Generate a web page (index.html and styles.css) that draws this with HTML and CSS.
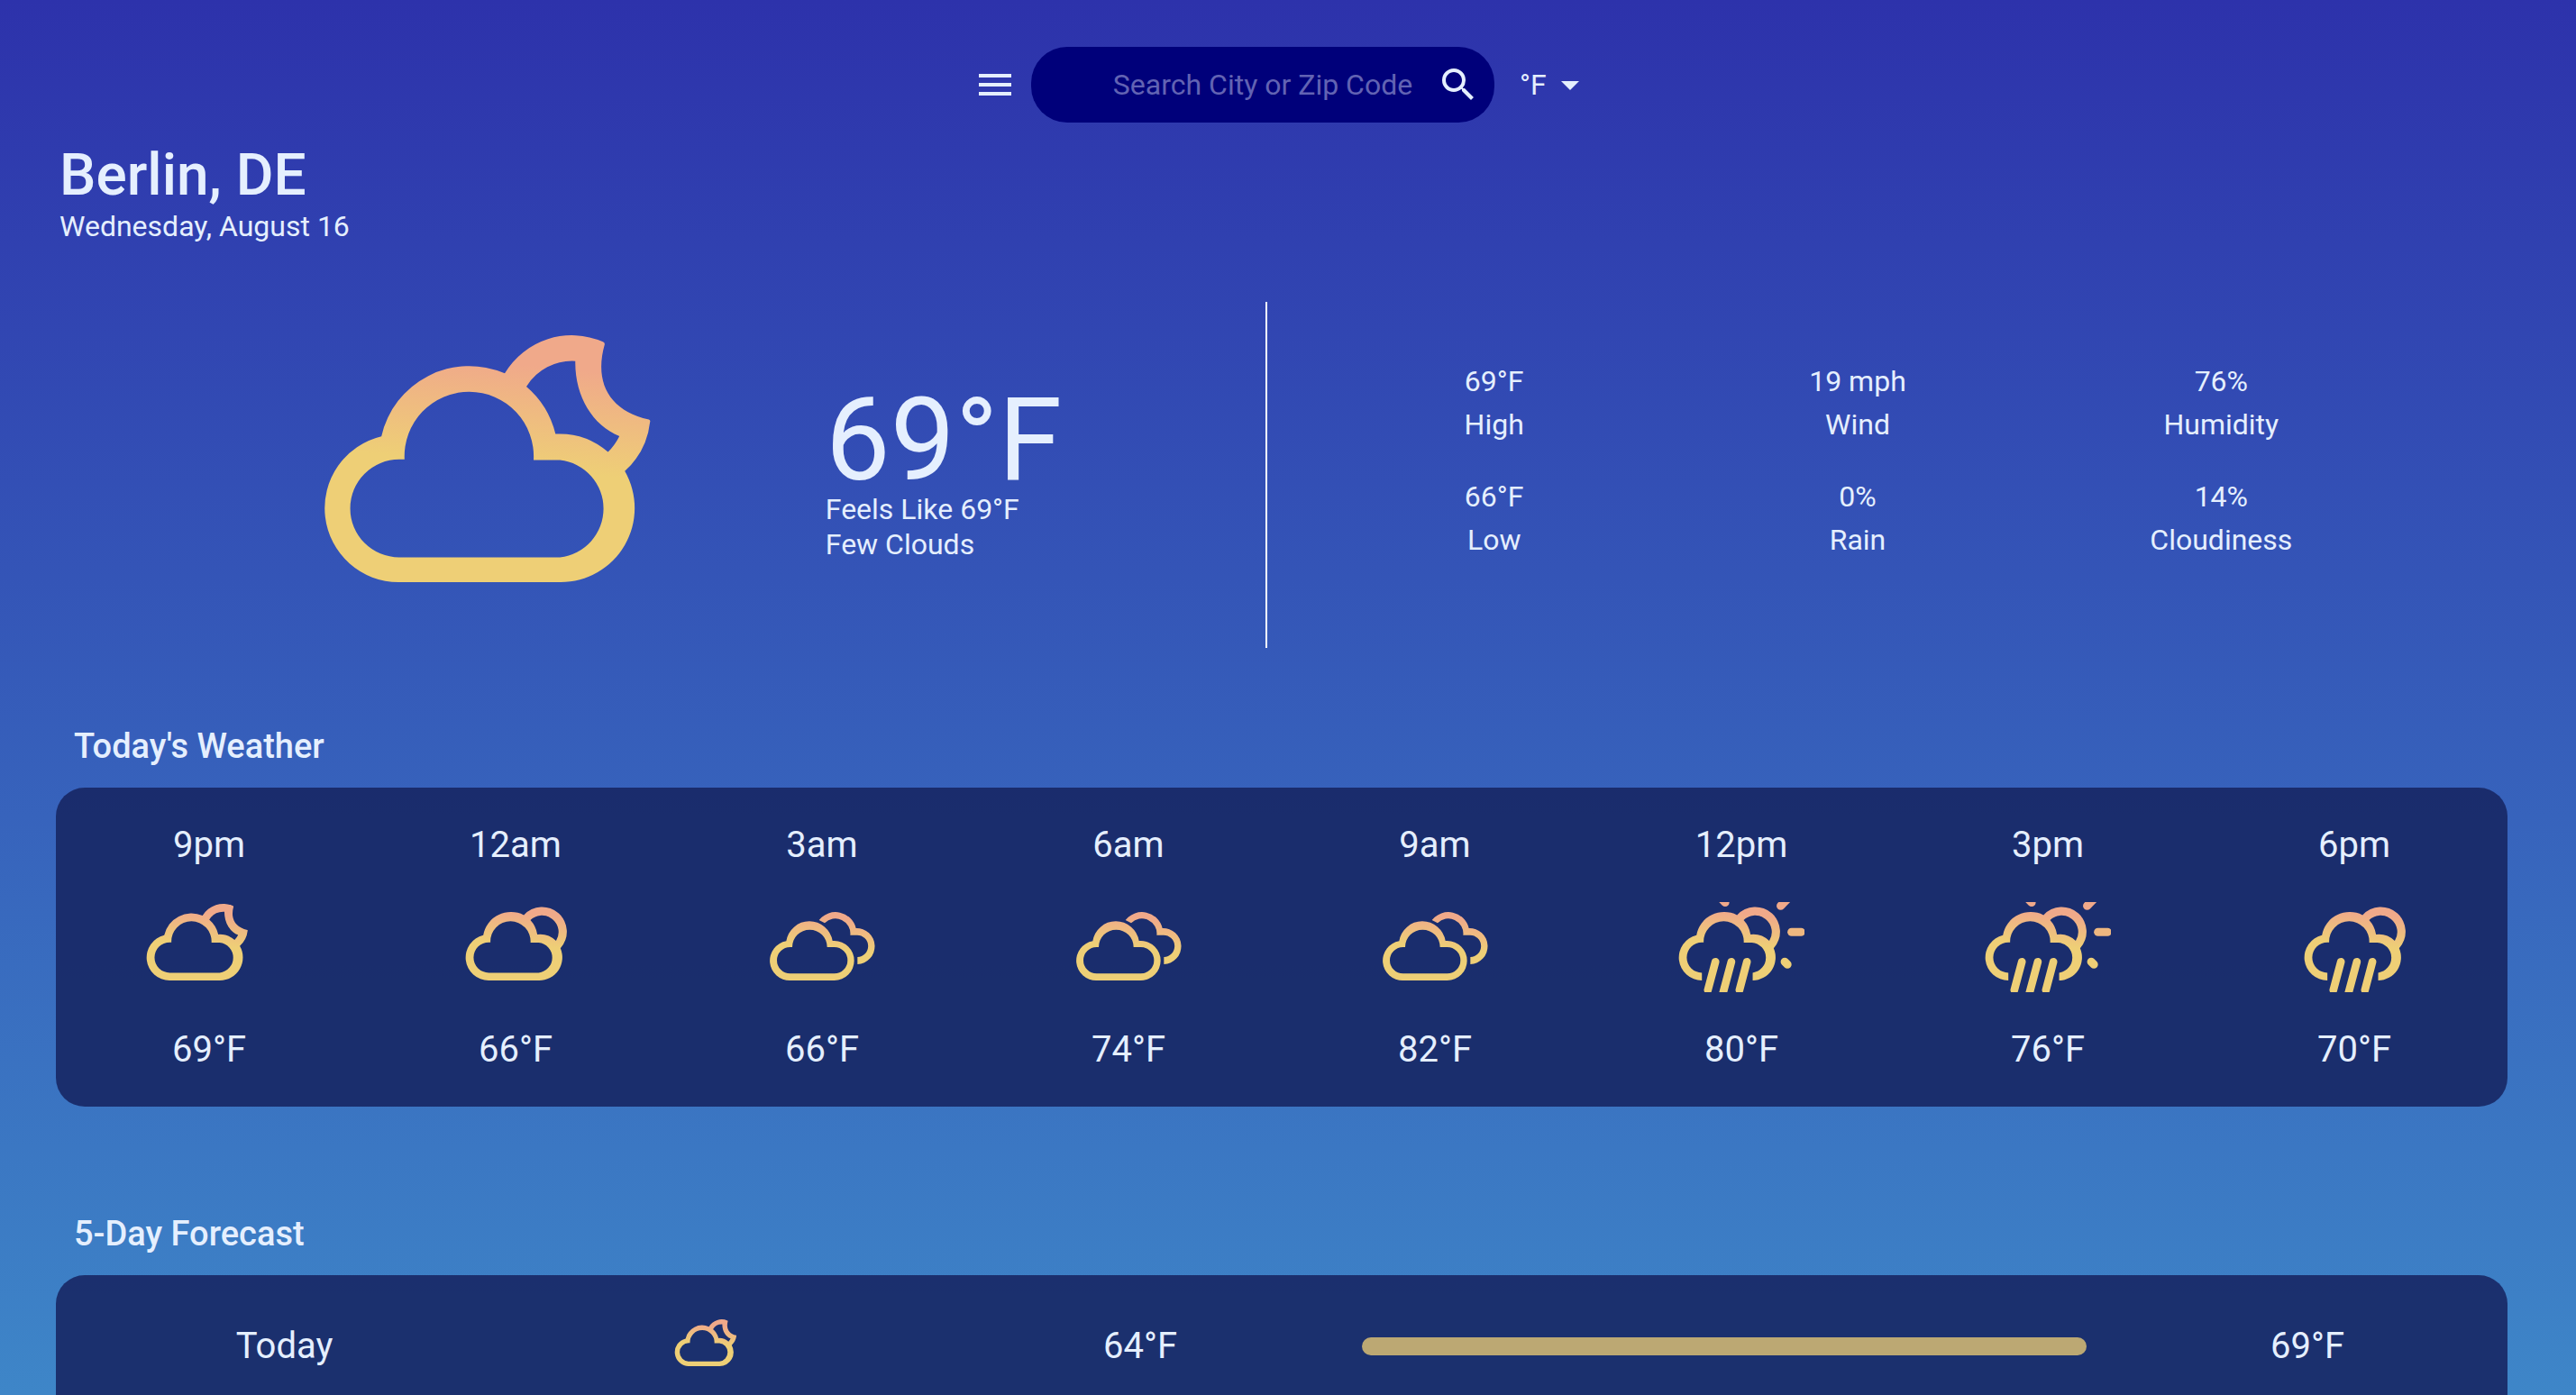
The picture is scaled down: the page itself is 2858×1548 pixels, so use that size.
FILE: index.html
```html
<!DOCTYPE html>
<html lang="en">
<head>
<meta charset="utf-8">
<meta name="viewport" content="width=device-width, initial-scale=1">
<title>Weather – Berlin, DE</title>
<link rel="stylesheet" href="styles.css">
</head>
<body>
<svg class="sprite" aria-hidden="true">
  <defs>
    <linearGradient id="glow" gradientUnits="userSpaceOnUse" x1="0" y1="90" x2="-34" y2="432">
      <stop offset="0" stop-color="#f0a98a"/>
      <stop offset="1" stop-color="#eecf76"/>
    </linearGradient>
    <linearGradient id="glow-clouds" gradientUnits="userSpaceOnUse" x1="1006" y1="54" x2="995" y2="158">
      <stop offset="0" stop-color="#f0a98a"/>
      <stop offset="1" stop-color="#eecf76"/>
    </linearGradient>
    <symbol id="night-cloud" viewBox="57 46 1353 967">
      <path fill="url(#glow)" fill-rule="evenodd" d="M309 887A246.4 246.4 0 0 1 252 401A300 300 0 0 1 663 191A260 260 0 0 1 990 86Q996 88 996 94C960 220 1010 315 1143 345Q1149 347 1147 353A262 262 0 0 1 1063 517A247 247 0 0 1 849 887ZM311 804A163 163 0 0 1 311 478H329A215.3 215.3 0 1 1 759 480H847A163 163 0 0 1 847 804ZM735 235A180 180 0 0 1 898 150C896 265 955 365 1045 400Q1030 430 1007 453A247 247 0 0 0 832 393A300 300 0 0 0 735 235Z"/>
    </symbol>
    <symbol id="sun-cloud" viewBox="-78 46 1353 967">
      <path fill="url(#glow)" fill-rule="evenodd" d="M309 887A246.4 246.4 0 0 1 252 401A300 300 0 0 1 687 186A264 264 0 0 1 1080 542A247 247 0 0 1 849 887ZM311 804A163 163 0 0 1 311 478H329A215.3 215.3 0 1 1 759 480H847A163 163 0 0 1 847 804ZM758 240A178 178 0 0 1 1033 462A247 247 0 0 0 832 393A300 300 0 0 0 758 240Z"/>
    </symbol>
    <symbol id="clouds" viewBox="1024 33 420 300">
      <path fill="url(#glow-clouds)" fill-rule="evenodd" d="M1128 294A66 66 0 0 1 1115 163A78 78 0 0 1 1269 162H1275A66 66 0 0 1 1275 294ZM1128 271A44 44 0 0 1 1128 183H1135A58 58 0 0 1 1251 183H1275A44 44 0 0 1 1275 271ZM1224 93A70 70 0 0 1 1347 120A60 60 0 0 1 1352 240V216A36.5 36.5 0 0 0 1350 143H1328A49.7 49.7 0 0 0 1243 103Z"/>
    </symbol>
    <g id="rain-shape">
      <path fill="url(#glow)" fill-rule="evenodd" d="M310 887A246.4 246.4 0 0 1 252 401A300 300 0 0 1 687 186A264 264 0 0 1 1080 542A247 247 0 0 1 855 887V804A163 163 0 0 0 847 480H759A215.3 215.3 0 1 0 329 478H311A163 163 0 0 0 310 804ZM758 240A178 178 0 0 1 1033 462A247 247 0 0 0 832 393A300 300 0 0 0 758 240Z"/>
      <path fill="none" stroke="#eecf76" stroke-width="84" stroke-linecap="round" d="M455 687L374 990M626 687L507 1132M793 687L713 990"/>
    </g>
    <symbol id="rain" viewBox="-78 46 1353 967"><use href="#rain-shape"/></symbol>
    <symbol id="sun-rain" viewBox="57 46 1353 967">
      <use href="#rain-shape"/>
      <path fill="none" stroke="#f0a98a" stroke-width="88" stroke-linecap="round" d="M1155 87L1250 -10M560 50L470 -40"/>
      <path fill="none" stroke="#eeb780" stroke-width="88" stroke-linecap="round" d="M1272 368H1374"/>
      <path fill="none" stroke="#eecf76" stroke-width="88" stroke-linecap="round" d="M1199 687L1228 716"/>
    </symbol>
  </defs>
</svg>

<header class="topbar">
  <button class="icon-button" type="button" aria-label="Menu">
    <svg class="icon" viewBox="0 0 24 24" aria-hidden="true"><path d="M3 18h18v-2H3v2zm0-5h18v-2H3v2zm0-7v2h18V6H3z"/></svg>
  </button>
  <form class="search" role="search">
    <input class="search-input" type="text" placeholder="Search City or Zip Code" aria-label="Search City or Zip Code">
    <button class="icon-button" type="submit" aria-label="Search">
      <svg class="icon" viewBox="0 0 24 24" aria-hidden="true"><path d="M15.5 14h-.79l-.28-.27A6.471 6.471 0 0 0 16 9.5 6.5 6.5 0 1 0 9.5 16c1.61 0 3.09-.59 4.23-1.57l.27.28v.79l5 4.99L20.49 19l-4.99-5zm-6 0C7.01 14 5 11.99 5 9.5S7.01 5 9.5 5 14 7.01 14 9.5 11.99 14 9.5 14z"/></svg>
    </button>
  </form>
  <div class="unit">
    <select class="unit-select" aria-label="Temperature unit">
      <option>°F</option>
      <option>°C</option>
    </select>
    <svg class="icon unit-caret" viewBox="0 0 24 24" aria-hidden="true"><path d="M7 10l5 5 5-5z"/></svg>
  </div>
</header>

<main class="page">
  <section class="place">
    <h1 class="city">Berlin, DE</h1>
    <p class="date">Wednesday, August 16</p>
  </section>

  <section class="current" aria-label="Current weather">
    <div class="now">
      <svg class="now-icon" role="img" aria-label="Few clouds"><use href="#night-cloud"/></svg>
      <div>
        <p class="now-temp">69°F</p>
        <p class="now-note">Feels Like 69°F</p>
        <p class="now-note">Few Clouds</p>
      </div>
    </div>
    <dl class="stats">
      <div class="stat"><dd>69°F</dd><dt>High</dt></div>
      <div class="stat"><dd>19 mph</dd><dt>Wind</dt></div>
      <div class="stat"><dd>76%</dd><dt>Humidity</dt></div>
      <div class="stat"><dd>66°F</dd><dt>Low</dt></div>
      <div class="stat"><dd>0%</dd><dt>Rain</dt></div>
      <div class="stat"><dd>14%</dd><dt>Cloudiness</dt></div>
    </dl>
  </section>

  <section class="block">
    <h2 class="block-title">Today's Weather</h2>
    <ol class="card hours">
      <li class="hour"><span>9pm</span><svg class="hour-icon" aria-hidden="true"><use href="#night-cloud"/></svg><span>69°F</span></li>
      <li class="hour"><span>12am</span><svg class="hour-icon" aria-hidden="true"><use href="#sun-cloud"/></svg><span>66°F</span></li>
      <li class="hour"><span>3am</span><svg class="hour-icon" aria-hidden="true"><use href="#clouds"/></svg><span>66°F</span></li>
      <li class="hour"><span>6am</span><svg class="hour-icon" aria-hidden="true"><use href="#clouds"/></svg><span>74°F</span></li>
      <li class="hour"><span>9am</span><svg class="hour-icon" aria-hidden="true"><use href="#clouds"/></svg><span>82°F</span></li>
      <li class="hour"><span>12pm</span><svg class="hour-icon" aria-hidden="true"><use href="#sun-rain"/></svg><span>80°F</span></li>
      <li class="hour"><span>3pm</span><svg class="hour-icon" aria-hidden="true"><use href="#sun-rain"/></svg><span>76°F</span></li>
      <li class="hour"><span>6pm</span><svg class="hour-icon" aria-hidden="true"><use href="#rain"/></svg><span>70°F</span></li>
    </ol>
  </section>

  <section class="block block-last">
    <h2 class="block-title">5-Day Forecast</h2>
    <ol class="card days">
      <li class="day">
        <span>Today</span>
        <svg class="day-icon" aria-hidden="true"><use href="#night-cloud"/></svg>
        <span>64°F</span>
        <div class="range-cell"><div class="range"></div></div>
        <span>69°F</span>
      </li>
    </ol>
  </section>
</main>
</body>
</html>
```
FILE: styles.css
```css
* {
  box-sizing: border-box;
  margin: 0;
  padding: 0;
}

body {
  min-height: 100vh;
  display: flex;
  flex-direction: column;
  background: linear-gradient(#2d32ab, #3e86c8);
  color: #e5effe;
  font-family: Roboto, "Liberation Sans", sans-serif;
  font-size: 32px;
  line-height: 39px;
}

ol {
  list-style: none;
}

.sprite {
  position: absolute;
  width: 0;
  height: 0;
}

.icon {
  display: block;
  width: 48px;
  height: 48px;
  fill: currentColor;
}

.icon-button {
  border: 0;
  background: none;
  color: inherit;
  cursor: pointer;
}

/* Top bar */
.topbar {
  display: flex;
  justify-content: center;
  align-items: center;
  gap: 16px;
  padding-top: 52px;
}

.search {
  display: flex;
  align-items: center;
  width: 514px;
  height: 84px;
  padding: 0 16px 0 64px;
  border-radius: 40px;
  background: #00007a;
}

.search-input {
  flex: 1;
  min-width: 0;
  height: 38px;
  border: 0;
  outline: 0;
  background: none;
  color: inherit;
  font: inherit;
  text-align: center;
}

.search-input::placeholder {
  color: #6263b3;
  opacity: 1;
}

.unit {
  display: grid;
  align-items: center;
  width: 104px;
}

.unit-select {
  grid-area: 1 / 1;
  padding: 0 48px 0 12px;
  border: 0;
  background: none;
  color: inherit;
  font: inherit;
  appearance: none;
}

.unit-caret {
  grid-area: 1 / 1;
  justify-self: end;
  margin-right: 12px;
  pointer-events: none;
}

/* Page */
.page {
  flex: 1;
  display: flex;
  flex-direction: column;
  padding: 21px 76px 0 62px;
}

.place {
  padding-left: 4px;
}

.city {
  font-size: 64px;
  line-height: 75px;
  font-weight: 500;
}

/* Current weather */
.current {
  display: grid;
  grid-template-columns: 1344fr 1376fr;
  min-height: 384px;
  margin-top: 64px;
}

.now {
  display: flex;
  justify-content: center;
  align-items: center;
  gap: 107px;
  padding-left: 70px;
  border-right: 2px solid #fff;
}

.now-icon {
  width: 451px;
  height: 322px;
}

.now-temp {
  font-size: 128px;
  line-height: 116px;
}

.stats {
  display: grid;
  grid-template-columns: repeat(3, 1fr);
  align-content: start;
  row-gap: 32px;
  padding: 64px 116px 0 50px;
  line-height: 48px;
  text-align: center;
}

/* Cards */
.block {
  margin-top: 86px;
}

.block-last {
  flex: 1;
  display: flex;
  flex-direction: column;
  margin-top: 118px;
}

.block-title {
  padding: 0 20px;
  margin-bottom: 22px;
  font-size: 38px;
  line-height: 47px;
  font-weight: 500;
}

.card {
  border-radius: 32px;
  background: rgba(23, 39, 100, 0.9);
  font-size: 40px;
  line-height: 47px;
}

.hours {
  display: grid;
  grid-template-columns: repeat(8, 1fr);
  padding: 40px 0;
}

.hour {
  display: flex;
  flex-direction: column;
  align-items: center;
  gap: 40px;
}

.hour-icon {
  width: 140px;
  height: 100px;
}

.days {
  flex: 1;
  border-radius: 32px 32px 0 0;
}

.day {
  display: grid;
  grid-template-columns: 449fr 502fr 446fr 850fr 444fr;
  align-items: center;
  justify-items: center;
  padding: 48px 0 0 29px;
}

.day-icon {
  width: 86px;
  height: 61px;
}

.range-cell {
  width: 100%;
  padding: 0 23px;
}

.range {
  height: 20px;
  border-radius: 10px;
  background: #bca873;
}
```
